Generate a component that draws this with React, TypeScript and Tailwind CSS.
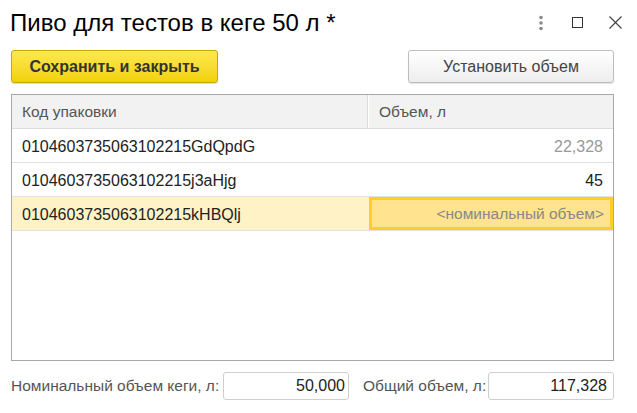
const FONT = { fontFamily: '"Liberation Sans", Arial, sans-serif' };

type Row = { code: string; vol: string; volMuted?: boolean; active?: boolean };

const rows: Row[] = [
  { code: "0104603735063102215GdQpdG", vol: "22,328", volMuted: true },
  { code: "0104603735063102215j3aHjg", vol: "45" },
  { code: "0104603735063102215kHBQlj", vol: "<номинальный объем>", active: true },
];

export default function App() {
  return (
    <div className="w-[637px] h-[413px] bg-white text-[#333] overflow-hidden" style={FONT}>
      {/* title bar */}
      <div className="flex items-center h-[44px] pl-[10px] pr-[15px] pt-[1px]">
        <div className="text-[24px] text-black leading-none flex-1">Пиво для тестов в кеге 50 л *</div>
        <div className="flex items-center">
          <svg width="6" height="16" viewBox="0 0 6 16" className="text-[#8a8a8a]">
            <circle cx="3" cy="2.5" r="1.8" fill="currentColor" />
            <circle cx="3" cy="8" r="1.8" fill="currentColor" />
            <circle cx="3" cy="13.5" r="1.8" fill="currentColor" />
          </svg>
          <div className="ml-[28px] w-[11px] h-[11px] border border-[#333]" />
          <svg width="13" height="13" viewBox="0 0 13 13" className="ml-[26px] text-[#444]">
            <path d="M0.5 0.5 L12.5 12.5 M12.5 0.5 L0.5 12.5" stroke="currentColor" strokeWidth="1.2" />
          </svg>
        </div>
      </div>

      {/* toolbar */}
      <div className="flex justify-between items-center px-[11px] mt-[6px] pr-[23px]">
        <button className="w-[207px] h-[33px] rounded-[3px] border border-[#c5ab00] bg-gradient-to-b from-[#ffe84a] to-[#f2d100] text-[16px] font-bold text-[#333] shadow-[0_1px_1px_rgba(0,0,0,0.15)]">
          Сохранить и закрыть
        </button>
        <button className="w-[206px] h-[33px] rounded-[3px] border border-[#bdbdbd] bg-gradient-to-b from-white to-[#ededed] text-[16px] text-[#444] shadow-[0_1px_1px_rgba(0,0,0,0.12)]">
          Установить объем
        </button>
      </div>

      {/* table */}
      <div className="mx-[11px] mr-[23px] mt-[11px] h-[267px] border border-[#a8a8a8] flex flex-col text-[16px]">
        <div className="flex h-[34px] bg-[#f2f2f2] border-b border-[#dcdcdc] text-[#555] text-[15.5px]">
          <div className="w-[356px] border-r border-[#dcdcdc] flex items-center pl-[10px]">Код упаковки</div>
          <div className="flex-1 flex items-center pl-[10px] border-l border-white">Объем, л</div>
        </div>
        {rows.map((r) => (
          <div
            key={r.code}
            className={`flex h-[34px] border-b border-[#e2e2e2] ${r.active ? "bg-[#fff2c6]" : ""}`}
          >
            <div className="w-[356px] flex items-center pl-[10px] pt-[2px] text-[#222]">{r.code}</div>
            {r.active ? (
              <div className="flex-1 flex items-center justify-end pr-[6px] pt-[1px] ml-[1px] bg-[#ffe38e] border-[3px] border-[#fcce2a] text-[#888] text-[15.5px]">
                {r.vol}
              </div>
            ) : (
              <div className={`flex-1 flex items-center justify-end pr-[10px] pt-[2px] ${r.volMuted ? "text-[#999]" : "text-[#222]"}`}>
                {r.vol}
              </div>
            )}
          </div>
        ))}
        <div className="flex-1" />
      </div>

      {/* bottom fields */}
      <div className="flex items-center mt-[11px] pl-[11px] pr-[23px] text-[15.5px] text-[#555] whitespace-nowrap">
        <span className="w-[205px] shrink-0">Номинальный объем кеги, л:</span>
        <div className="ml-[7px] shrink-0 w-[126px] h-[28px] rounded-[3px] border border-[#cfcfcf] flex items-center justify-end pr-[3px] text-[#222] text-[16px]">
          50,000
        </div>
        <span className="ml-[14px] shrink-0">Общий объем, л:</span>
        <div className="ml-auto shrink-0 w-[126px] h-[28px] rounded-[3px] border border-[#cfcfcf] flex items-center justify-end pr-[6px] text-[#222] text-[16px]">
          117,328
        </div>
      </div>
    </div>
  );
}
